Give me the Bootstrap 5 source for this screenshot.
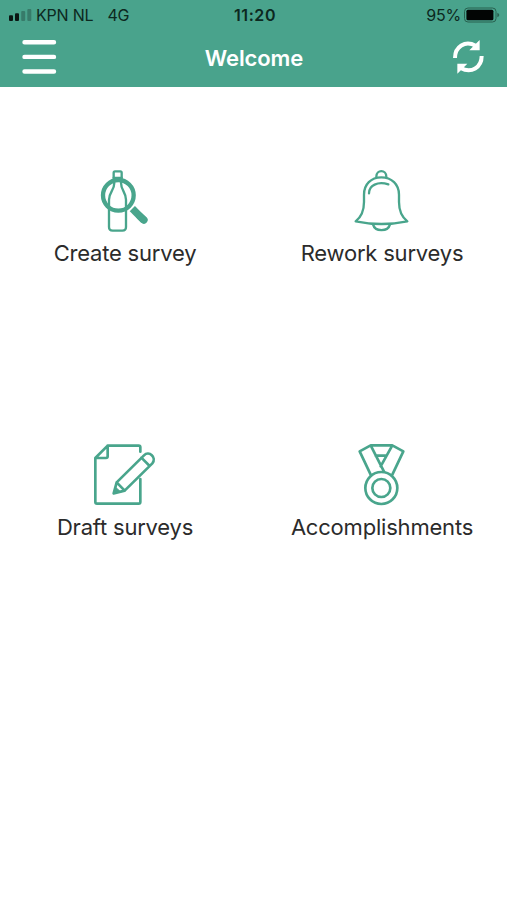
<!DOCTYPE html>
<html lang="en">
<head>
<meta charset="utf-8">
<meta name="viewport" content="width=device-width, initial-scale=1">
<title>Welcome</title>
<link href="https://cdn.jsdelivr.net/npm/bootstrap@5.3.0/dist/css/bootstrap.min.css" rel="stylesheet">
<style>
body{font-family:Inter,"Liberation Sans",sans-serif;color:#2b2b2b;min-height:900px}
.app-header{background:#49a38c;height:87px}
.status-bar{height:30px;font-size:16px;line-height:30px;color:#0c2820;padding:0 7px 0 9px}
.status-side{flex:1 1 0}
.carrier{letter-spacing:-.2px}
.network{margin-left:14px;letter-spacing:-.2px}
.battery-level{margin-right:3px;letter-spacing:-.2px}
.clock{font-size:16px;font-weight:600;letter-spacing:.6px;padding-left:1px}
.title-bar{height:57px;padding:0 20px 3px 21px}
.title-text{font-size:22px;font-weight:600;letter-spacing:-.1px;line-height:30px;padding-top:1px}
.icon-button{width:38px;height:38px;line-height:0}
.menu-grid{padding-top:73px}
.menu-row{column-gap:7px}
.menu-tile{flex:1 1 0;height:274px;color:#2b2b2b}
.tile-label{font-size:22px;line-height:26px;letter-spacing:-.2px;white-space:nowrap}
.tile-icon{fill:none;stroke:#49a58c;stroke-linejoin:round;stroke-linecap:round}
</style>
</head>
<body class="bg-white m-0">
<header class="app-header">
  <div class="status-bar d-flex align-items-center">
    <div class="status-side d-flex align-items-center">
      <svg width="23" height="14" viewBox="0 0 23 14" fill="#0a1613"><rect y="7.3" width="4" height="5.7" rx="1"/><rect x="6" y="5.3" width="4" height="7.7" rx="1"/><rect x="12.2" y="3" width="4" height="10" rx="1" opacity=".28"/><rect x="18.3" y="1" width="4" height="12" rx="1" opacity=".28"/></svg>
      <span class="carrier ms-1">KPN NL</span><span class="network">4G</span>
    </div>
    <div class="clock">11:20</div>
    <div class="status-side d-flex align-items-center justify-content-end">
      <span class="battery-level">95%</span>
      <svg width="36" height="16" viewBox="0 0 36 16"><rect x=".5" y="1" width="31.5" height="14" rx="3.5" fill="none" stroke="#28604f"/><rect x="2.4" y="2.8" width="27" height="10.4" rx="1.5" fill="#020504"/><path d="M33.3 5.7q2 .8 2 2.3t-2 2.3z" fill="#28604f"/></svg>
    </div>
  </div>
  <div class="title-bar d-flex align-items-center justify-content-between text-white">
    <button class="icon-button btn p-0 border-0" aria-label="Menu"><svg width="38" height="38" viewBox="0 0 38 38" stroke="#fff" stroke-width="4.4" stroke-linecap="round"><path d="M3.5 4.2H33M3.5 18.9H33M3.5 33.5H33"/></svg></button>
    <h1 class="title-text m-0">Welcome</h1>
    <button class="icon-button btn p-0 border-0" aria-label="Refresh"><svg width="38" height="38" viewBox="0 0 114 114"><g fill="none" stroke="#fff" stroke-width="12"><path d="M18 60C18 26 48 6 80 23"/><path d="M98 54C98 88 67 108 35 90"/></g><path d="M92 6v31H61zM25 107V77h30z" fill="#fff"/></svg></button>
  </div>
</header>
<main class="menu-grid">
  <div class="menu-row d-flex">
    <a class="menu-tile d-flex flex-column align-items-center text-decoration-none" href="#">
      <svg class="tile-icon" width="80" height="80" viewBox="-15 0 240 240" stroke-width="7"><path d="M71 54V38q0-4 4-4h16q4 0 4 4v16M73 68C73 92 57 96 57 119V201q0 11 11 11h29q11 0 11-11V119C108 96 93 92 93 68"/><path d="M71 54h24"/><circle cx="85" cy="106" r="46" stroke-width="13"/><path d="M127 146l35 35" stroke-width="22" stroke-linecap="butt"/><path d="M150 169l12 11" stroke-width="22"/></svg>
      <span class="tile-label">Create survey</span>
    </a>
    <a class="menu-tile d-flex flex-column align-items-center text-decoration-none" href="#">
      <svg class="tile-icon" width="80" height="80" viewBox="-9 0 240 240" stroke-width="7"><path d="M32 184C50 170 57 154 57 126V104C57 73 78 52 109 52S162 73 162 104V126C162 154 169 170 187 184Q109 200 32 184Z"/><path d="M94 50C94 28 124 28 124 50M84 193C90 216 129 216 135 193M72 100C72 76 98 63 130 73"/></svg>
      <span class="tile-label">Rework surveys</span>
    </a>
  </div>
  <div class="menu-row d-flex">
    <a class="menu-tile d-flex flex-column align-items-center text-decoration-none" href="#">
      <svg class="tile-icon" width="80" height="80" viewBox="0 -3 240 240" stroke-width="8"><path d="M166 50V37q0-5-5-5H68L31 69V201q0 5 5 5H161q5 0 5-5V132M68 32V64q0 5-5 5H31"/><path d="M86 175L95 142 177 61C192 46 216 68 202 85L119 167ZM95 142L119 167M169 68L194 93"/><path d="M86 175L91 156 105 169Z" fill="#49a58c" stroke-width="3"/></svg>
      <span class="tile-label">Draft surveys</span>
    </a>
    <a class="menu-tile d-flex flex-column align-items-center text-decoration-none" href="#">
      <svg class="tile-icon" width="80" height="80" viewBox="-9 -3 240 240" stroke-width="8"><circle cx="109" cy="159" r="48"/><circle cx="109" cy="159" r="27"/><path d="M77 119L44 49 77 31H142L175 49 142 119M77 31L117 110M142 31L107 94M92 62H124"/></svg>
      <span class="tile-label">Accomplishments</span>
    </a>
  </div>
</main>
<script src="https://cdn.jsdelivr.net/npm/bootstrap@5.3.0/dist/js/bootstrap.bundle.min.js"></script>
</body>
</html>
